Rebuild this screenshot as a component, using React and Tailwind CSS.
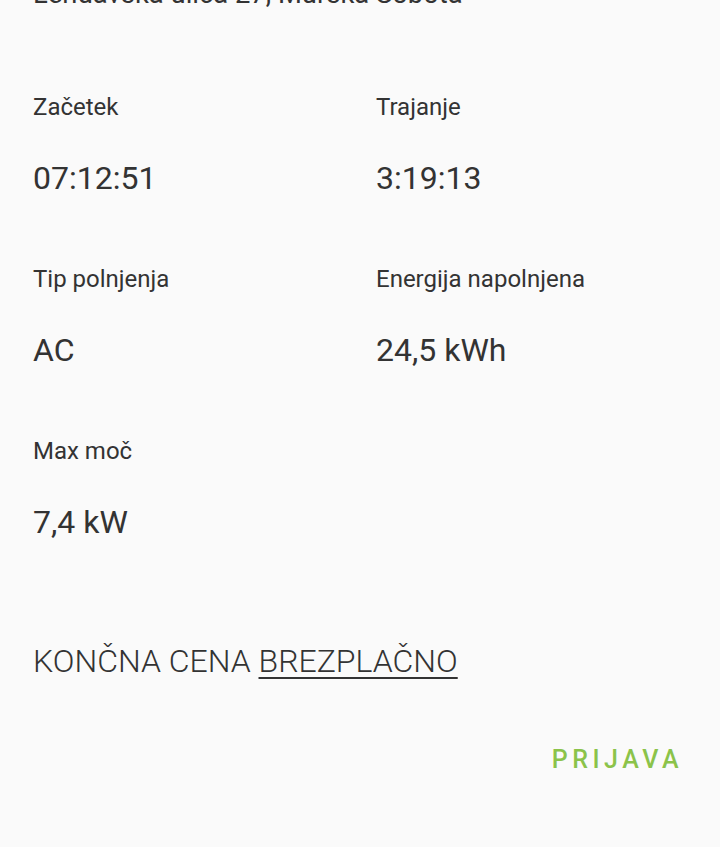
import React from 'react';

const stats = [
    { label: 'Začetek', value: '07:12:51' },
    { label: 'Trajanje', value: '3:19:13' },
    { label: 'Tip polnjenja', value: 'AC' },
    { label: 'Energija napolnjena', value: '24,5 kWh' },
    { label: 'Max moč', value: '7,4 kW' },
];

const Stat = ({ label, value }) => (
    <div className="flex flex-col gap-[38px]">
        <span className="text-[24px] leading-[28px]">{label}</span>
        <span className="text-[32px] leading-[38px]">{value}</span>
    </div>
);

const App = () => {
    return (
        <div className="min-h-screen overflow-hidden bg-[#fafafa] text-[#333333] font-['Roboto',sans-serif]">
            <p className="-mt-[22px] pl-[33px] text-[27.4px] leading-[32px] whitespace-nowrap">
                Lendavska ulica 27, Murska Sobota
            </p>

            <div className="mt-[83px] grid grid-cols-[343px_1fr] gap-y-[68px] pl-[33px]">
                {stats.map((s) => (
                    <Stat key={s.label} label={s.label} value={s.value} />
                ))}
            </div>

            <p className="mt-[101px] pl-[33px] text-[32px] leading-[38px] font-light">
                KONČNA CENA{' '}
                <span className="underline decoration-2 underline-offset-[5px]">BREZPLAČNO</span>
            </p>

            <div className="mt-[66px] flex justify-end pr-[37px]">
                <button className="text-[25px] leading-[28px] font-medium tracking-[4.5px] text-[#8bc34a]">
                    PRIJAVA
                </button>
            </div>
        </div>
    );
};

export default App;
